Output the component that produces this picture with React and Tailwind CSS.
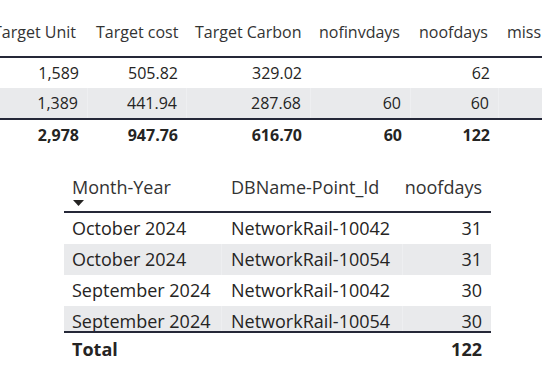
import React from 'react';

const topCols = [
  { title: 'Target Unit', w: 'w-[103px]' },
  { title: 'Target cost', w: 'w-[99px]' },
  { title: 'Target Carbon', w: 'w-[124px]' },
  { title: 'nofinvdays', w: 'w-[100px]' },
  { title: 'noofdays', w: 'w-[88px]' },
  { title: 'miss', w: 'w-[80px]' },
];

const topRows = [
  ['1,589', '505.82', '329.02', '', '62', ''],
  ['1,389', '441.94', '287.68', '60', '60', ''],
];

const topTotal = ['2,978', '947.76', '616.70', '60', '122', ''];

const bottomRows = [
  ['October 2024', 'NetworkRail-10042', '31'],
  ['October 2024', 'NetworkRail-10054', '31'],
  ['September 2024', 'NetworkRail-10042', '30'],
  ['September 2024', 'NetworkRail-10054', '30'],
];

const font = { fontFamily: '"Segoe UI", "Open Sans", sans-serif' };

export default function App() {
  return (
    <div className="w-[542px] h-[378px] overflow-hidden bg-white text-[#252423]" style={font}>
      {/* Top table */}
      <div className="ml-[-15px] w-[620px] text-[16px]">
        <div className="flex h-[58px] items-end border-b-2 border-[#252838] pb-[12px]">
          {topCols.map((c) => (
            <div key={c.title} className={`${c.w} shrink-0 pl-[8px] pr-[9px] leading-6 whitespace-nowrap text-[#333]`}>
              {c.title}
            </div>
          ))}
        </div>
        {topRows.map((row, i) => (
          <div key={i} className={`flex h-[30px] items-center ${i % 2 === 1 ? 'bg-[#e9eaec]' : 'bg-white'}`}>
            {row.map((v, j) => (
              <div
                key={j}
                className={`${topCols[j].w} shrink-0 h-full flex items-center justify-end px-[9px] leading-6 ${i % 2 === 1 ? 'border-r border-[#eeeff1]' : ''}`}
              >
                {v}
              </div>
            ))}
          </div>
        ))}
        <div className="flex h-[32px] items-center border-t-2 border-[#252838] font-bold">
          {topTotal.map((v, j) => (
            <div key={j} className={`${topCols[j].w} shrink-0 flex justify-end px-[9px] leading-6`}>
              {v}
            </div>
          ))}
        </div>
      </div>

      {/* Bottom table */}
      <div className="ml-[64px] w-[427px] text-[18px]">
        <div className="flex border-b-2 border-[#252838] pt-[25px] pb-[5px]">
          <div className="w-[158px] shrink-0 pl-[8px]">
            <div className="leading-6 text-[#333]">Month-Year</div>
            <svg width="11" height="6" viewBox="0 0 11 6" className="mt-[1px] ml-[1px] block">
              <path d="M0 0 H11 L5.5 6 Z" fill="#252423" />
            </svg>
          </div>
          <div className="w-[181px] shrink-0 pl-[9px] leading-6 text-[#333]">DBName-Point_Id</div>
          <div className="w-[88px] shrink-0 pr-[9px] leading-6 text-right text-[#333]">noofdays</div>
        </div>
        <div className="h-[118px] overflow-hidden">
          {bottomRows.map((r, i) => (
            <div key={i} className={`flex h-[31px] items-center ${i % 2 === 1 ? 'bg-[#e9eaec]' : 'bg-white'}`}>
              <div className={`w-[158px] shrink-0 h-full flex items-center pl-[8px] whitespace-nowrap ${i % 2 === 1 ? 'border-r border-[#eeeff1]' : ''}`}>{r[0]}</div>
              <div className={`w-[181px] shrink-0 h-full flex items-center pl-[9px] whitespace-nowrap ${i % 2 === 1 ? 'border-r border-[#eeeff1]' : ''}`}>{r[1]}</div>
              <div className="w-[88px] shrink-0 h-full flex items-center justify-end pr-[9px]">{r[2]}</div>
            </div>
          ))}
        </div>
        <div className="flex h-[34px] items-center border-t-2 border-[#252838] font-bold">
          <div className="w-[158px] shrink-0 pl-[8px]">Total</div>
          <div className="w-[181px] shrink-0" />
          <div className="w-[88px] shrink-0 pr-[9px] text-right">122</div>
        </div>
      </div>
    </div>
  );
}
